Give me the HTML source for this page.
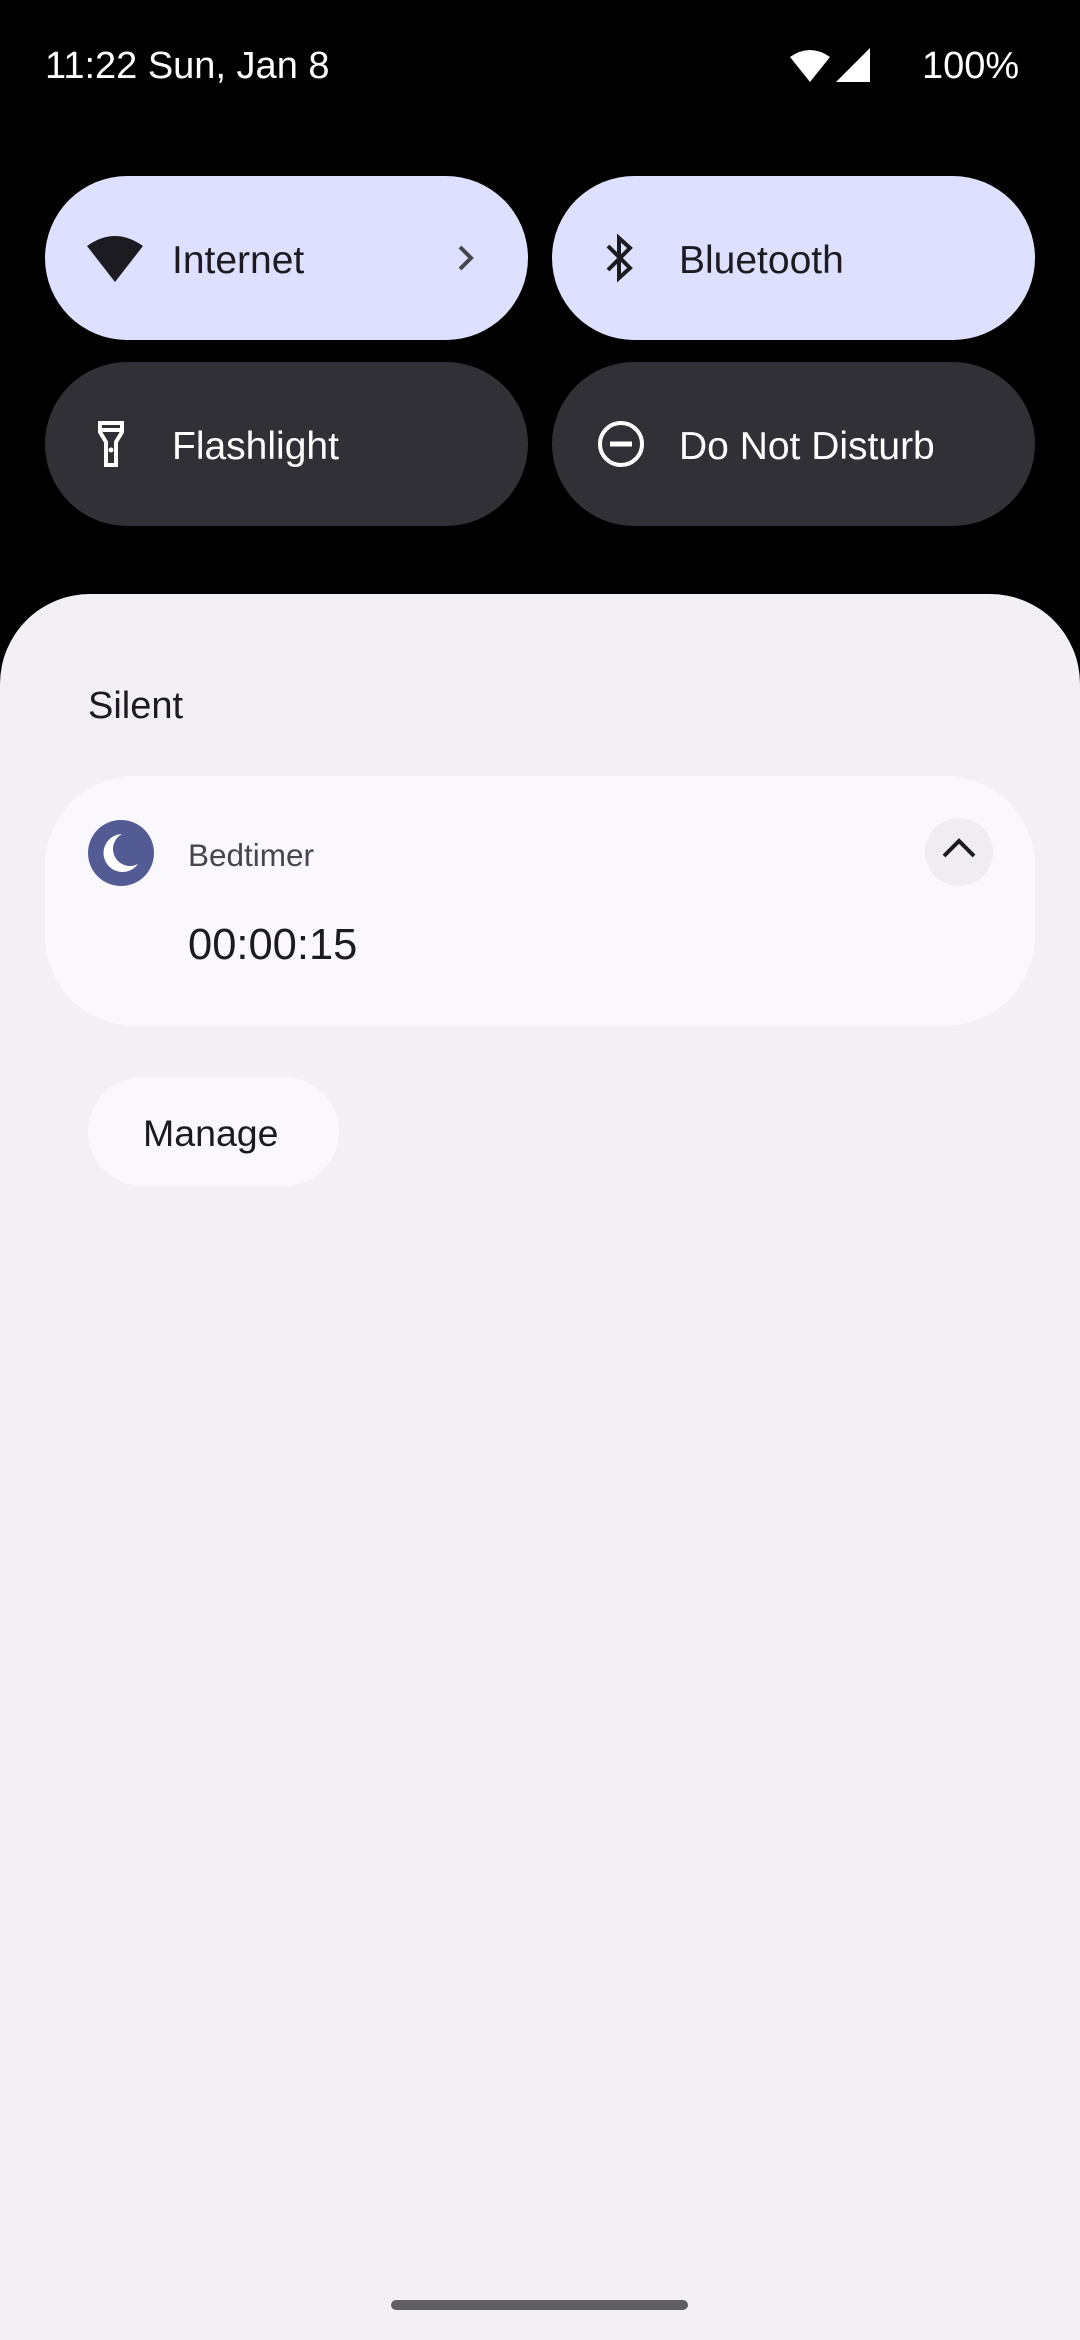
<!DOCTYPE html>
<html><head><meta charset="utf-8"><style>
body{margin:0;width:1080px;height:2340px;background:#000;position:relative;overflow:hidden;font-family:"Liberation Sans",sans-serif}
.a{position:absolute}
.tile{position:absolute;width:483px;height:164px;border-radius:82px}
.tl{font-size:39px;position:absolute;left:127px;top:3px;line-height:164px}
</style></head><body>
<div class="a" style="left:45px;top:45px;font-size:38px;color:#fff">11:22 Sun, Jan 8</div>
<svg class="a" style="left:790px;top:48px" width="80" height="36" viewBox="0 0 80 36"><path d="M0 9Q20 -5 40 9L20 34Z" fill="#fff"/><path d="M80 0V34H46Z" fill="#fff"/></svg>
<div class="a" style="left:922px;top:45px;font-size:38px;color:#fff">100%</div>

<div class="tile" style="left:45px;top:176px;background:#dde0ff">
<svg class="a" style="left:42px;top:58px" width="56" height="48" viewBox="0 0 56 48"><path d="M0 12Q28 -8 56 12L28 48Z" fill="#1b1b21"/></svg>
<div class="tl" style="color:#1b1b21">Internet</div>
<svg class="a" style="left:412px;top:68px" width="18" height="28" viewBox="0 0 18 28"><path d="M3 3L14 14L3 25" stroke="#46464f" stroke-width="4" fill="none"/></svg>
</div>
<div class="tile" style="left:552px;top:176px;background:#dde0ff">
<svg class="a" style="left:50px;top:56px" width="36" height="52" viewBox="0 0 36 52"><path d="M6 14L28 36L17 46V6L28 16L6 38" stroke="#1b1b21" stroke-width="4" fill="none"/></svg>
<div class="tl" style="color:#1b1b21">Bluetooth</div>
</div>
<div class="tile" style="left:45px;top:362px;background:#303036">
<svg class="a" style="left:52px;top:58px" width="28" height="48" viewBox="0 0 28 48"><path d="M3 3H25V12L19 22V45H9V22L3 12Z M3 10H25" stroke="#fff" stroke-width="4" fill="none"/><circle cx="14" cy="30" r="2.5" fill="#fff"/></svg>
<div class="tl" style="color:#fff">Flashlight</div>
</div>
<div class="tile" style="left:552px;top:362px;background:#303036">
<svg class="a" style="left:45px;top:58px" width="48" height="48" viewBox="0 0 48 48"><circle cx="24" cy="24" r="21" stroke="#fff" stroke-width="4" fill="none"/><path d="M13 24H35" stroke="#fff" stroke-width="5"/></svg>
<div class="tl" style="color:#fff">Do Not Disturb</div>
</div>

<div class="a" style="left:0;top:594px;width:1080px;height:1746px;background:#f2f0f5;border-radius:90px 90px 0 0"></div>
<div class="a" style="left:88px;top:685px;font-size:38px;color:#1b1b21">Silent</div>
<div class="a" style="left:45px;top:776px;width:990px;height:250px;border-radius:90px;background:#faf8fd"></div>
<svg class="a" style="left:88px;top:820px" width="66" height="66" viewBox="0 0 66 66"><circle cx="33" cy="33" r="33" fill="#525b94"/><path d="M34 14A19 19 0 1 0 50 44A14 14 0 0 1 34 14Z" fill="#fff"/></svg>
<div class="a" style="left:188px;top:837px;font-size:31.5px;color:#45464f">Bedtimer</div>
<div class="a" style="left:925px;top:818px;width:68px;height:68px;border-radius:50%;background:#efedf2"></div>
<svg class="a" style="left:940px;top:836px" width="38" height="26" viewBox="0 0 38 26"><path d="M4 20L19 5L34 20" stroke="#1b1b21" stroke-width="4" fill="none"/></svg>
<div class="a" style="left:188px;top:921px;font-size:43.5px;color:#1b1b21">00:00:15</div>
<div class="a" style="left:88px;top:1077px;width:251px;height:109px;border-radius:55px;background:#faf8fd"></div>
<div class="a" style="left:143px;top:1112px;font-size:37.5px;color:#1b1b21">Manage</div>
<div class="a" style="left:391px;top:2300px;width:297px;height:10px;border-radius:5px;background:#5f5f63"></div>
</body></html>
